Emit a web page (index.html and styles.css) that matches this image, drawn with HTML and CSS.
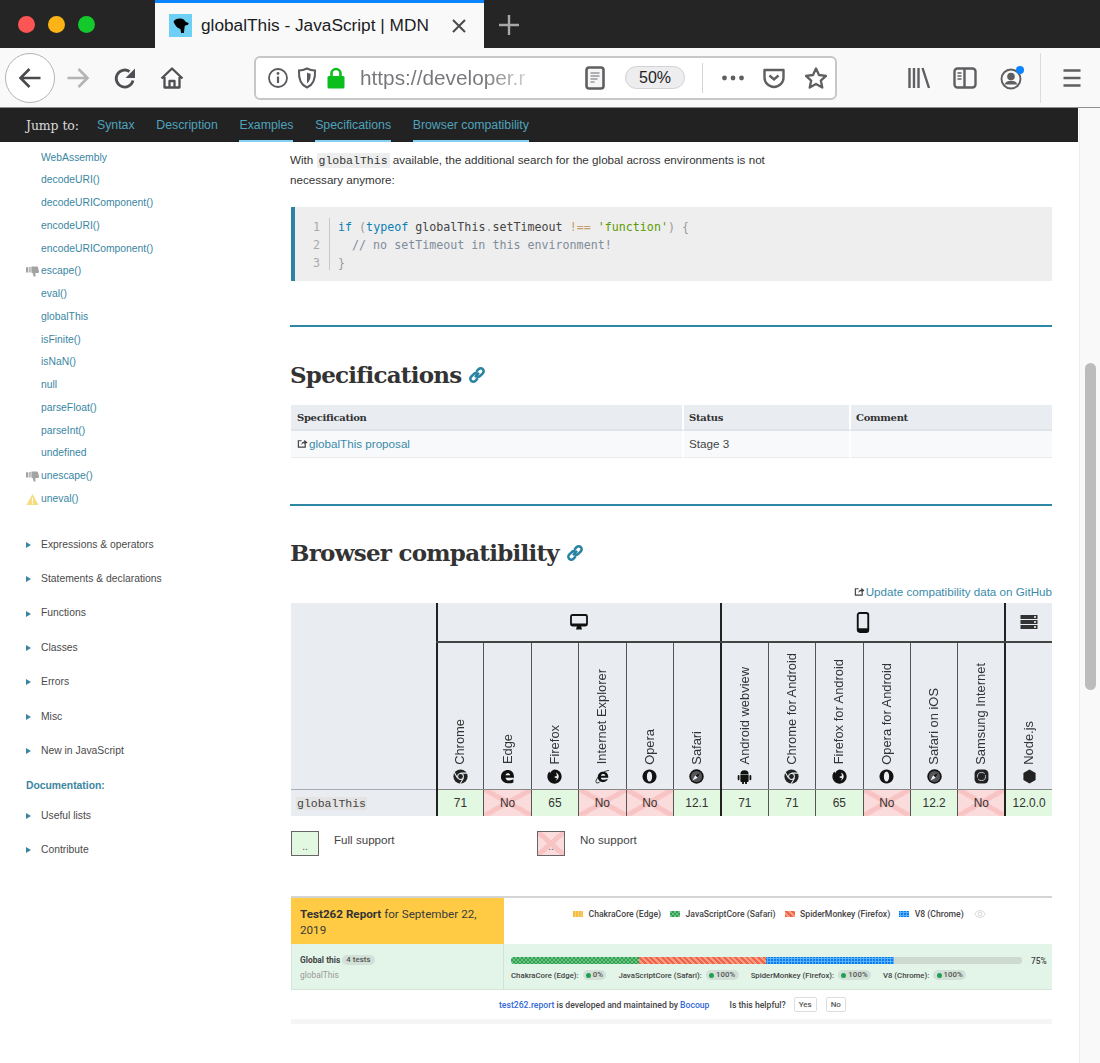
FILE: index.html
```html
<!DOCTYPE html>
<html lang="en">
<head>
<meta charset="utf-8">
<title>globalThis - JavaScript | MDN</title>
<link rel="stylesheet" href="styles.css">
</head>
<body>
<svg class="sprite" aria-hidden="true">
  <symbol id="i-chrome" viewBox="0 0 16 16"><circle cx="8" cy="8" r="7.6" fill="#222"/><circle cx="8" cy="8" r="3.1" fill="#222" stroke="#e9edf1" stroke-width="1.1"/><path d="M8 4.4H15.2M4.9 9.8L1.4 3.6M11.1 9.8L7.6 15.8" stroke="#e9edf1" stroke-width="1.1" fill="none"/></symbol>
  <symbol id="i-edge" viewBox="0 0 16 16"><path fill-rule="evenodd" fill="#111" d="M1 8.5C1 3.5 4.5 1 8.5 1 12.500 1 15 4 15 9.200H6c.2 3.400 5 3.800 8.300 1.800v3.300C9 16.500 1 14.800 1 8.500zM6 6.600h4.800C10.600 4 6.400 4 6 6.600z"/></symbol>
  <symbol id="i-firefox" viewBox="0 0 16 16"><path fill="#111" d="M8 .6c4.300 0 7.600 3.300 7.600 7.500S12.200 15.700 8 15.700.4 12.300.4 8.100C.4 6 1.300 4 2.600 2.700L3.400 4.400C4.300 2.500 6 .9 8 .6z"/><path fill="#e9edf1" d="M9.600 3.600c1.900.8 3 2.500 2.900 4.500-.1 2.100-1.500 3.800-3.400 4.300 1-.7 1.500-1.700 1.400-2.800L8.300 9.300l-.2-1.200 2.400-.6C10.500 6 10.200 4.700 9.600 3.600z"/></symbol>
  <symbol id="i-ie" viewBox="0 0 16 16"><path fill-rule="evenodd" fill="#111" d="M3 8.500C3 5 5.500 2.800 8.800 2.800 12 2.800 14.200 5 14.200 9.200H6.200c.2 2.800 4.300 3 7.500 1.300 -.8 2.500-2.800 3.500-5 3.500C5.500 14 3 12 3 8.500zM6.300 7.100h4.700C10.900 4.900 6.600 4.900 6.300 7.100z"/><path d="M14.800 1.600C11 1.400 2.600 7 1 13c-.5 2 1.500 2.600 4 1" stroke="#111" stroke-width=".9" fill="none"/></symbol>
  <symbol id="i-opera" viewBox="0 0 16 16"><path fill-rule="evenodd" fill="#111" d="M8 .5a7.500 7.500 0 1 0 .01 0zM8 2.600c1.800 0 2.800 2.500 2.800 5.400S9.800 13.400 8 13.400 5.200 10.900 5.200 8 6.200 2.600 8 2.600z"/></symbol>
  <symbol id="i-safari" viewBox="0 0 16 16"><circle cx="8" cy="8" r="7.700" fill="#111"/><circle cx="8" cy="8" r="6" fill="#555"/><path d="M12.300 3.700L9.400 9.400 3.700 12.300 6.600 6.600z" fill="#eef"/><path d="M12.300 3.700L9.400 9.400 6.600 6.600z" fill="#111"/></symbol>
  <symbol id="i-android" viewBox="0 0 16 16"><path fill="#111" d="M3.600 5.800A4.400 4.400 0 0 1 12.400 5.800zM3.600 6.500h8.800v6.300a1 1 0 0 1-1 1h-.8v1.500a1 1 0 0 1-2 0v-1.500H7.400v1.500a1 1 0 0 1-2 0v-1.500h-.8a1 1 0 0 1-1-1zM1.700 6.500a.95.950 0 0 1 .95.950v3.600a.95.950 0 0 1-1.900 0V7.450A.95.950 0 0 1 1.700 6.500zM14.300 6.500a.95.950 0 0 1 .95.950v3.600a.95.950 0 0 1-1.900 0V7.450a.95.950 0 0 1 .95-.95z"/></symbol>
  <symbol id="i-samsung" viewBox="0 0 16 16"><rect x=".6" y=".6" width="14.800" height="14.800" rx="4.500" fill="#222"/><circle cx="8" cy="8" r="4.300" fill="none" stroke="#ccd" stroke-width="1"/><path d="M2.800 10.500C5 9 10 6 13.200 5.300" stroke="#222" stroke-width="1.600" fill="none"/></symbol>
  <symbol id="i-node" viewBox="0 0 16 16"><path fill="#222" d="M8 .6l6.500 3.700v7.400L8 15.400 1.500 11.700V4.300z"/></symbol>
  <symbol id="i-ext" viewBox="0 0 12 12"><path d="M9 6.800V10H1.500V3H5" fill="none" stroke="#444" stroke-width="1.300"/><path d="M4.500 7.500C5 5 6.500 3.800 8 3.800V2l3.500 2.800L8 7.400V5.600C6.500 5.600 5.400 6.200 4.500 7.500z" fill="#444"/></symbol>
  <symbol id="i-link" viewBox="0 0 16 16"><g fill="none" stroke="#2a83a2" stroke-width="2.600" stroke-linecap="round"><path d="M6.700 9.300L9.300 6.700"/><path d="M8 3.800l1.600-1.600a2.900 2.900 0 0 1 4.200 4.100l-2.600 2.600a2.900 2.900 0 0 1-3.400.5"/><path d="M8 12.200l-1.600 1.600a2.900 2.900 0 0 1-4.200-4.100l2.600-2.600a2.900 2.900 0 0 1 3.400-.5"/></g></symbol>
  <symbol id="i-thumb" viewBox="0 0 14 14"><path fill="#a3a3a3" d="M0 2.500h2.500v5.500H0zM3.500 2.200h1.500V8H3.500zM5.800 1.500H11.500c.8 0 1.300.6 1.500 1.300l1 4.300c.1.800-.4 1.400-1.200 1.400H10l.3 2.500c.2 1.800-1.900 2-2.300.7L7.300 9 5.800 8z"/></symbol>
</svg>

<div class="window">
  <header class="tabbar">
    <span class="light light-red"></span>
    <span class="light light-yellow"></span>
    <span class="light light-green"></span>
    <div class="tab">
      <svg class="favicon" viewBox="0 0 23 23"><rect width="23" height="23" fill="#6fd0f5"/><path d="M4.500 7.500C6 5 9 4 12 4.500c2.500.3 4 1.800 4.500 3.300l3 1.200c.3 1.300-.5 2.200-2 2.200-.8 0-1.500.3-1.800 1l-.8 6.800h-2.800l-.6-3.800-3.500-2C6.500 11.700 5.500 10 4.500 7.500z" fill="#000"/></svg>
      <span class="tab-title">globalThis - JavaScript | MDN</span>
      <svg class="tab-close" viewBox="0 0 16 16"><path d="M2 2l12 12M14 2L2 14" stroke="#4a4a4a" stroke-width="2" fill="none"/></svg>
    </div>
    <svg class="newtab" viewBox="0 0 22 22"><path d="M11 1v20M1 11h20" stroke="#a8a8a8" stroke-width="2.400" fill="none"/></svg>
  </header>

  <nav class="toolbar">
    <div class="backbtn">
      <svg class="ic24" viewBox="0 0 24 24"><path d="M22.500 12H2.500M11.500 3l-9 9 9 9" stroke="#4a4a4f" stroke-width="2.600" fill="none"/></svg>
    </div>
    <div class="slot slot-fwd"><svg class="ic24" viewBox="0 0 24 24"><path d="M1.500 12H21.500M12.500 3l9 9-9 9" stroke="#b4b4b6" stroke-width="2.600" fill="none"/></svg></div>
    <div class="slot slot-reload"><svg class="ic24" viewBox="0 0 24 24"><path d="M20 14.500A8.500 8.500 0 1 1 16.500 5.500" stroke="#4f4f53" stroke-width="2.800" fill="none"/><path d="M22 2.500v9.500h-9.500z" fill="#4f4f53"/></svg></div>
    <div class="slot slot-home"><svg class="ic24" viewBox="0 0 24 24"><path d="M1.500 12.500L12 2.500l10.500 10M4.500 11v10.500h15V11M9.500 21.500V15h5v6.500" stroke="#4f4f53" stroke-width="2.300" fill="none" stroke-linejoin="round"/></svg></div>

    <div class="urlbar">
      <svg class="ic24" viewBox="0 0 24 24"><circle cx="12" cy="12" r="9" stroke="#5a5a5e" stroke-width="1.800" fill="none"/><path d="M12 10.500v6.500" stroke="#5a5a5e" stroke-width="2.200"/><circle cx="12" cy="7.500" r="1.400" fill="#5a5a5e"/></svg>
      <svg class="ic24" viewBox="0 0 24 24"><path d="M4 4.500C8 4.500 10 3.500 12 2.500c2 1 4 2 8 2 .5 8.500-2 14.500-8 17-6-2.500-8.500-8.500-8-17z" stroke="#5a5a5e" stroke-width="2" fill="none"/><path d="M12 6.500c1 .6 2 1 3.700 1.200.2 4-1 7.800-3.700 9.800z" fill="#5a5a5e"/></svg>
      <svg class="ic24" viewBox="0 0 24 24"><path d="M7.500 11V7.500a4.500 4.500 0 0 1 9 0V11" stroke="#0cbe1c" stroke-width="2.600" fill="none"/><rect x="3.500" y="10" width="17" height="12.500" rx="1.500" fill="#0cbe1c"/></svg>
      <span class="url">https://developer.r</span>
      <svg class="ic24" viewBox="0 0 24 24"><rect x="3.500" y="1.500" width="17" height="21" rx="2.500" stroke="#5f5f62" stroke-width="2.600" fill="#f6f6f6"/><path d="M7.500 7h9M7.500 10h9M7.500 13h7M7.500 16h4" stroke="#6a6a6e" stroke-width="1.100"/></svg>
      <span class="zoompill">50%</span>
      <span class="urlsep"></span>
      <svg class="ic24 u-dots" viewBox="0 0 24 24"><circle cx="3.500" cy="12" r="2.400" fill="#5f5f62"/><circle cx="12" cy="12" r="2.400" fill="#5f5f62"/><circle cx="20.500" cy="12" r="2.400" fill="#5f5f62"/></svg>
      <svg class="ic24 u-pocket" viewBox="0 0 24 24"><path d="M2.500 4h19v7.500a9.500 9.500 0 0 1-19 0z" stroke="#5f5f62" stroke-width="2.400" fill="none" stroke-linejoin="round"/><path d="M7.500 9.500l4.500 4 4.500-4" stroke="#5f5f62" stroke-width="2.400" fill="none"/></svg>
      <svg class="ic24 u-star" viewBox="0 0 24 24"><path d="M12 2.500l3 6.500 7 .8-5.200 4.800 1.500 7L12 18l-6.300 3.600 1.500-7L2 9.800l7-.8z" stroke="#5f5f62" stroke-width="2.300" fill="none" stroke-linejoin="round"/></svg>
    </div>

    <div class="toolbar-right">
      <div class="slot slot-46"><svg class="ic24" viewBox="0 0 24 24"><path d="M2.500 2v20M7 2v20M11.500 2v20M15.500 2l6.500 20" stroke="#5f5f62" stroke-width="2.400" fill="none"/></svg></div>
      <div class="slot slot-46"><svg class="ic24" viewBox="0 0 24 24"><rect x="1.500" y="2.500" width="21" height="19" rx="3" stroke="#5f5f62" stroke-width="2.400" fill="none"/><path d="M11.500 2.500v19" stroke="#5f5f62" stroke-width="2.400"/><path d="M4.500 7h4M4.500 10h4M4.500 13h4" stroke="#5f5f62" stroke-width="1.300"/></svg></div>
      <div class="slot slot-48 account">
        <svg class="ic24" viewBox="0 0 24 24"><circle cx="11" cy="13" r="9.500" stroke="#5f5f62" stroke-width="1.900" fill="none"/><circle cx="11" cy="10.500" r="3.800" fill="#5f5f62"/><path d="M4.500 18.500c1-3 3.500-3.800 6.500-3.800s5.500.8 6.500 3.800z" fill="#5f5f62"/></svg>
        <span class="dot"></span>
      </div>
      <span class="tbsep"></span>
      <div class="slot slot-menu"><svg class="ic24" viewBox="0 0 24 24"><path d="M3.500 4.500h17M3.500 12h17M3.500 19.500h17" stroke="#5f5f62" stroke-width="2.500" fill="none"/></svg></div>
    </div>
  </nav>

  <div class="viewport">
    <div class="page">
      <div class="jumpbar">
        <span class="jump-label">Jump to:</span>
        <a class="jump-link">Syntax</a>
        <a class="jump-link">Description</a>
        <a class="jump-link jump-seen">Examples</a>
        <a class="jump-link jump-seen">Specifications</a>
        <a class="jump-link jump-seen">Browser compatibility</a>
      </div>
      <div class="columns">
        <aside class="sidebar">
          <ul class="side-list">
            <li>WebAssembly</li>
            <li>decodeURI()</li>
            <li>decodeURIComponent()</li>
            <li>encodeURI()</li>
            <li>encodeURIComponent()</li>
            <li><svg class="side-ic"><use href="#i-thumb"/></svg>escape()</li>
            <li>eval()</li>
            <li>globalThis</li>
            <li>isFinite()</li>
            <li>isNaN()</li>
            <li>null</li>
            <li>parseFloat()</li>
            <li>parseInt()</li>
            <li>undefined</li>
            <li><svg class="side-ic"><use href="#i-thumb"/></svg>unescape()</li>
            <li><svg class="side-ic" viewBox="0 0 14 14"><path d="M7 1l6.500 12H.5z" fill="#f6dc7c"/><path d="M7 5v4.500M7 10.500v1.500" stroke="#fff" stroke-width="1.300"/></svg>uneval()</li>
          </ul>
          <ul class="side-groups">
            <li><span class="tri"></span>Expressions &amp; operators</li>
            <li><span class="tri"></span>Statements &amp; declarations</li>
            <li><span class="tri"></span>Functions</li>
            <li><span class="tri"></span>Classes</li>
            <li><span class="tri"></span>Errors</li>
            <li><span class="tri"></span>Misc</li>
            <li><span class="tri"></span>New in JavaScript</li>
            <li class="side-head">Documentation:</li>
            <li><span class="tri"></span>Useful lists</li>
            <li><span class="tri"></span>Contribute</li>
          </ul>
        </aside>

        <main class="main">
          <p class="lead">With <code class="inline-code">globalThis</code> available, the additional search for the global across environments is not necessary anymore:</p>

          <div class="codeblock">
            <div class="gutter"><span>1</span><span>2</span><span>3</span></div>
            <pre class="code"><span class="k">if</span> <span class="p">(</span><span class="k">typeof</span> globalThis<span class="p">.</span>setTimeout <span class="o">!==</span> <span class="s">'function'</span><span class="p">) {</span>
  <span class="c">// no setTimeout in this environment!</span>
<span class="p">}</span></pre>
          </div>

          <hr class="rule rule-a">
          <h2 class="heading heading-a">Specifications <svg class="anchor"><use href="#i-link"/></svg></h2>

          <table class="spec">
            <colgroup><col class="spec-c1"><col class="spec-c2"><col></colgroup>
            <thead><tr><th>Specification</th><th>Status</th><th>Comment</th></tr></thead>
            <tbody><tr><td><svg class="ext"><use href="#i-ext"/></svg><a class="lnk">globalThis proposal</a></td><td>Stage 3</td><td></td></tr></tbody>
          </table>

          <hr class="rule rule-b">
          <h2 class="heading heading-b">Browser compatibility <svg class="anchor"><use href="#i-link"/></svg></h2>

          <div class="update"><svg class="ext"><use href="#i-ext"/></svg><a class="lnk">Update compatibility data on GitHub</a></div>

          <table class="compat">
            <colgroup>
              <col class="c-first">
              <col class="c-b"><col class="c-b"><col class="c-b"><col class="c-b"><col class="c-b"><col class="c-b">
              <col class="c-b"><col class="c-b"><col class="c-b"><col class="c-b"><col class="c-b"><col class="c-b">
              <col>
            </colgroup>
            <thead>
              <tr class="r-plat">
                <th rowspan="2" class="blank"></th>
                <th colspan="6" class="plat"><svg class="plat-ic" viewBox="0 0 18 16"><rect x="1" y="1" width="16" height="10.500" rx="1.500" stroke="#111" stroke-width="1.800" fill="none"/><rect x="1" y="9.500" width="16" height="2.500" fill="#111"/><path d="M6 15.500h6l-1-3.500H7z" fill="#111"/></svg></th>
                <th colspan="6" class="plat"><svg class="plat-ic plat-phone" viewBox="0 0 12 20"><rect x="1" y="1" width="10" height="18" rx="1.800" stroke="#111" stroke-width="1.800" fill="none"/><rect x="1" y="15.500" width="10" height="3.500" fill="#111"/></svg></th>
                <th class="plat"><svg class="plat-ic" viewBox="0 0 18 16"><path d="M.5 1h17v4H.5zM.5 6h17v4H.5zM.5 11h17v4H.5z" fill="#333"/><circle cx="15" cy="3" r="1" fill="#fff"/><circle cx="15" cy="8" r="1" fill="#fff"/><circle cx="15" cy="13" r="1" fill="#fff"/></svg></th>
              </tr>
              <tr class="r-names">
                <th><div class="bw"><svg class="bw-ic"><use href="#i-chrome"/></svg><span class="vt">Chrome</span></div></th>
                <th><div class="bw"><svg class="bw-ic"><use href="#i-edge"/></svg><span class="vt">Edge</span></div></th>
                <th><div class="bw"><svg class="bw-ic"><use href="#i-firefox"/></svg><span class="vt">Firefox</span></div></th>
                <th><div class="bw"><svg class="bw-ic"><use href="#i-ie"/></svg><span class="vt">Internet Explorer</span></div></th>
                <th><div class="bw"><svg class="bw-ic"><use href="#i-opera"/></svg><span class="vt">Opera</span></div></th>
                <th><div class="bw"><svg class="bw-ic"><use href="#i-safari"/></svg><span class="vt">Safari</span></div></th>
                <th class="grp"><div class="bw"><svg class="bw-ic"><use href="#i-android"/></svg><span class="vt">Android webview</span></div></th>
                <th><div class="bw"><svg class="bw-ic"><use href="#i-chrome"/></svg><span class="vt">Chrome for Android</span></div></th>
                <th><div class="bw"><svg class="bw-ic"><use href="#i-firefox"/></svg><span class="vt">Firefox for Android</span></div></th>
                <th><div class="bw"><svg class="bw-ic"><use href="#i-opera"/></svg><span class="vt">Opera for Android</span></div></th>
                <th><div class="bw"><svg class="bw-ic"><use href="#i-safari"/></svg><span class="vt">Safari on iOS</span></div></th>
                <th><div class="bw"><svg class="bw-ic"><use href="#i-samsung"/></svg><span class="vt">Samsung Internet</span></div></th>
                <th class="grp"><div class="bw"><svg class="bw-ic"><use href="#i-node"/></svg><span class="vt">Node.js</span></div></th>
              </tr>
            </thead>
            <tbody>
              <tr>
                <th class="feature"><code>globalThis</code></th>
                <td class="yes grp">71</td><td class="no">No</td><td class="yes">65</td><td class="no">No</td><td class="no">No</td><td class="yes">12.1</td>
                <td class="yes grp">71</td><td class="yes">71</td><td class="yes">65</td><td class="no">No</td><td class="yes">12.2</td><td class="no">No</td>
                <td class="yes grp">12.0.0</td>
              </tr>
            </tbody>
          </table>

          <div class="legend">
            <div class="legend-item legend-first"><span class="swatch yes">..</span><span class="legend-text">Full support</span></div>
            <div class="legend-item"><span class="swatch no">..</span><span class="legend-text">No support</span></div>
          </div>

          <section class="t262">
            <div class="t-row t-top">
              <div class="t-title"><b>Test262 Report</b> for September 22, 2019</div>
              <div class="t-keys">
                <span class="key"><i class="sw sw-chakra"></i>ChakraCore (Edge)</span>
                <span class="key"><i class="sw sw-jsc"></i>JavaScriptCore (Safari)</span>
                <span class="key"><i class="sw sw-sm"></i>SpiderMonkey (Firefox)</span>
                <span class="key"><i class="sw sw-v8"></i>V8 (Chrome)</span>
                <svg class="eye" viewBox="0 0 16 12"><path d="M1 6c3-6 11-6 14 0-3 6-11 6-14 0z" fill="none" stroke="#ccc" stroke-width="1"/><circle cx="8" cy="6" r="2.500" fill="none" stroke="#ccc" stroke-width="1"/></svg>
              </div>
            </div>
            <div class="t-row t-bottom">
              <div class="t-name">
                <div class="t-name1"><b>Global this</b><span class="pill">4 tests</span></div>
                <div class="t-name2">globalThis</div>
              </div>
              <div class="t-results">
                <div class="t-barline">
                  <div class="bar"><span class="seg sw-jsc"></span><span class="seg sw-sm"></span><span class="seg sw-v8"></span></div>
                  <b class="pct">75%</b>
                </div>
                <div class="t-stats">
                  <b>ChakraCore (Edge):</b><span class="pill stat"><i class="gdot"></i>0%</span>
                  <b>JavaScriptCore (Safari):</b><span class="pill stat"><i class="gdot"></i>100%</span>
                  <b>SpiderMonkey (Firefox):</b><span class="pill stat"><i class="gdot"></i>100%</span>
                  <b>V8 (Chrome):</b><span class="pill stat"><i class="gdot"></i>100%</span>
                </div>
              </div>
            </div>
            <div class="t-foot">
              <span class="foot-credit"><a class="blue">test262.report</a> is developed and maintained by <a class="blue">Bocoup</a></span>
              <span class="foot-help">Is this helpful?</span>
              <span class="fbtn">Yes</span>
              <span class="fbtn">No</span>
            </div>
            <div class="t-band"></div>
          </section>
        </main>
      </div>
    </div>
    <div class="scrollbar"><div class="thumb"></div></div>
  </div>
</div>
</body>
</html>
```

FILE: styles.css
```css
* { box-sizing: border-box; }
html, body { margin: 0; padding: 0; background: #fff; }
body { font-family: "Liberation Sans", Arial, sans-serif; color: #333; overflow: hidden; }
.sprite { display: none; }
ul { list-style: none; margin: 0; padding: 0; }
.window { width: 1100px; height: 1063px; overflow: hidden; display: flex; flex-direction: column; }

/* tab strip */
.tabbar { height: 48px; background: #252525; display: flex; align-items: center; padding-left: 18px; flex: none; }
.light { width: 17px; height: 17px; border-radius: 50%; margin-right: 13px; margin-top: 1px; }
.light-red { background: #fd5454; }
.light-yellow { background: #fcb316; }
.light-green { background: #14c92c; }
.tab { margin-left: 47px; width: 329px; height: 48px; background: #f9f9fa; border-top: 3px solid #0a84ff; display: flex; align-items: center; padding-left: 14px; }
.favicon { width: 23px; height: 23px; flex: none; }
.tab-title { margin-left: 9px; font-size: 17.250px; color: #1c1c1e; flex: 1; white-space: nowrap; }
.tab-close { width: 16px; height: 16px; margin-right: 17px; flex: none; }
.newtab { width: 22px; height: 22px; margin-left: 14px; margin-top: 1px; }

/* toolbar */
.toolbar { height: 60px; background: #f9f9fa; border-bottom: 1px solid #8f8f91; display: flex; align-items: center; padding-left: 5px; flex: none; }
.ic24 { width: 24px; height: 24px; flex: none; display: block; }
.backbtn { width: 50px; height: 50px; border-radius: 50%; border: 1.500px solid #b3b3b3; background: #fff; display: flex; align-items: center; justify-content: center; flex: none; }
.slot { height: 48px; display: flex; align-items: center; justify-content: center; flex: none; }
.slot-fwd { width: 46px; }
.slot-reload { width: 47px; }
.slot-home { width: 48px; }
.slot-46 { width: 46px; }
.slot-48 { width: 48px; }
.slot-menu { width: 48px; margin-left: 7px; }
.urlbar { margin-left: 58px; width: 583px; height: 44px; background: #fff; border: 2px solid #c7c7c9; border-radius: 6px; display: flex; align-items: center; padding-left: 10px; flex: none; }
.urlbar .ic24 + .ic24 { margin-left: 5px; }
.url { margin-left: 12px; width: 223px; flex: none; font-size: 20.800px; white-space: nowrap; overflow: hidden; background: linear-gradient(90deg, #77777b 0, #77777b 125px, #c4c4c6 160px, #f2f2f2 172px, #fff 180px); -webkit-background-clip: text; background-clip: text; color: transparent; }
.zoompill { margin-left: 18px; width: 60px; height: 23px; border-radius: 12px; background: #ededf0; border: 1px solid #d2d2d4; display: flex; align-items: center; justify-content: center; font-size: 16px; color: #222; flex: none; }
.urlsep { margin-left: 17px; width: 1px; height: 30px; background: #d4d4d6; flex: none; }
.urlbar .ic24.u-dots { margin-left: 18px; }
.urlbar .ic24.u-pocket { margin-left: 17px; }
.urlbar .ic24.u-star { margin-left: 18px; }
.toolbar-right { margin-left: 59px; display: flex; align-items: center; }
.account { position: relative; }
.dot { position: absolute; top: 12px; left: 28px; width: 8px; height: 8px; border-radius: 50%; background: #0a84ff; }
.tbsep { width: 1px; height: 50px; background: #dcdcde; margin-left: 4px; flex: none; }

/* viewport */
.viewport { flex: 1; display: flex; min-height: 0; }
.page { width: 1079px; flex: none; }
.scrollbar { flex: 1; background: #f9f9f9; border-left: 1px solid #ededed; padding: 255px 4px 0 5px; }
.thumb { height: 327px; background: #bcbcbc; border-radius: 6px; }

.jumpbar { height: 34px; background: #222; display: flex; align-items: flex-start; padding-left: 26px; width: 1078px; }
.jump-label { font-family: "DejaVu Serif", serif; font-size: 12.500px; color: #d8d8d8; line-height: 35px; width: 71px; flex: none; white-space: nowrap; letter-spacing: -.1px; }
.jump-link { color: #4ea3bd; font-size: 12.300px; line-height: 35px; height: 34px; margin-right: 21.700px; }
.jump-seen { border-bottom: 2px solid #83d0f2; }

.columns { display: flex; }
.sidebar { width: 290px; flex: none; padding: 4.700px 0 0 26px; font-size: 10.350px; }
.side-list li { height: 22.750px; line-height: 22.750px; padding-left: 15px; color: #3a86a2; position: relative; white-space: nowrap; }
.side-ic { position: absolute; left: 0; top: 5px; width: 13px; height: 13px; }
.side-groups { margin-top: 17px; }
.side-groups li { height: 34.400px; line-height: 34.400px; color: #4a4a4a; display: flex; align-items: center; white-space: nowrap; }
.tri { width: 0; height: 0; border-left: 5px solid #3a86a2; border-top: 3px solid transparent; border-bottom: 3px solid transparent; margin-right: 10px; }
.side-groups .side-head { height: 30.400px; padding-top: 4.400px; line-height: 26px; color: #3a86a2; font-weight: bold; }

.main { width: 762px; flex: none; padding-top: 8px; font-size: 11.650px; }
.lead { margin: 0; width: 480px; font-size: 11.650px; line-height: 20px; color: #333; }
.inline-code { font-family: "Liberation Mono", monospace; font-size: 11.500px; line-height: 1; background: #eee; padding: 1px 2px; color: #333; }
.codeblock { margin-top: 17px; height: 74px; background: #eee; border-left: 4px solid #2a83a2; margin-left: 1px; display: flex; padding-top: 11px; font-family: "DejaVu Sans Mono", monospace; font-size: 11.660px; line-height: 18px; }
.gutter { width: 17px; margin-left: 18px; height: 52px; border-right: 1px solid #c8c8c8; display: flex; flex-direction: column; color: #aaa; }
.gutter span { height: 18px; }
.code { margin: 0 0 0 8px; font: inherit; color: #444; }
.k { color: #0a7fb5; }
.p { color: #999; }
.o { color: #c69b6d; }
.s { color: #5d9b00; }
.c { color: #7f8c9a; }

.rule { border: 0; height: 2px; background: #2f87a6; margin: 0; }
.rule-a { margin-top: 44px; }
.rule-b { margin-top: 46px; }
.heading { margin: 0; font-family: "DejaVu Serif", serif; font-weight: bold; font-size: 23px; line-height: 36px; color: #333; letter-spacing: -.75px; display: flex; align-items: center; white-space: nowrap; }
.heading-a { margin-top: 30px; }
.heading-b { margin-top: 29px; }
.anchor { width: 16px; height: 16px; margin-left: 8px; flex: none; }

.spec { margin: 12px 0 0 1px; width: 761px; border-collapse: separate; border-spacing: 0; table-layout: fixed; font-size: 11.650px; }
.spec-c1 { width: 393px; }
.spec-c2 { width: 167px; }
.spec th { height: 26px; background: #e9edf1; border-right: 2px solid #fff; border-bottom: 2px solid #dfe4e8; text-align: left; padding: 0 0 0 5px; font-family: "DejaVu Serif", serif; font-size: 10px; letter-spacing: -.3px; color: #333; }
.spec th:first-child, .spec td:first-child { padding-left: 6px; }
.spec th:last-child, .spec td:last-child { border-right: 0; }
.spec td { height: 27px; background: #f7f9fa; border-right: 2px solid #fff; border-bottom: 1px solid #e8ecef; padding: 0 0 1px 5px; color: #444; }
.lnk { color: #3a8bab; }
.ext { width: 11px; height: 11px; margin-right: 1px; vertical-align: -1px; }

.update { margin-top: 13px; height: 16px; line-height: 16px; font-size: 11.650px; text-align: right; }

.compat { margin: 3px 0 0 1px; width: 761px; border-collapse: collapse; table-layout: fixed; font-size: 11.900px; }
.c-first { width: 145.500px; }
.c-b { width: 47.400px; }
.compat th, .compat td { padding: 0; background: #e9edf1; font-weight: normal; text-align: center; border: 0; }
.r-plat th { height: 39px; border-bottom: 2px solid #444; }
.r-plat .plat { border-left: 2px solid #222; }
.r-plat .blank { background: #e9edf1; border-bottom: 1px solid #aab; }
.plat-ic { height: 18px; width: 18px; display: block; margin: 0 auto; }
.plat-phone { height: 21px; }
.r-names th { height: 147px; vertical-align: bottom; border-left: 1px solid #555; border-bottom: 1px solid #888; }
.r-names .grp { border-left: 2px solid #222; }
.r-names th:first-child { border-left: 2px solid #222; }
.bw { display: flex; flex-direction: column-reverse; align-items: center; padding-bottom: 5px; }
.bw-ic { width: 15px; height: 15px; margin-top: 4px; flex: none; }
.vt { writing-mode: vertical-rl; transform: rotate(180deg); font-size: 12.900px; color: #333; white-space: nowrap; line-height: 14px; }
.compat tbody td, .compat tbody th { height: 27px; border-left: 1px solid #555; color: #333; }
.compat tbody .grp { border-left: 2px solid #222; }
.compat .feature { border-left: 0; text-align: left; padding-left: 5px; }
.feature code { font-family: "Liberation Mono", monospace; font-size: 11.500px; background: #e4e4e4; color: #444; padding: 0 1px; }
.compat td.yes, .swatch.yes { background: #e2f8e0; }
.compat td.no, .swatch.no {
  background-color: #fbdcdc;
  background-image:
    linear-gradient(to top right, transparent calc(50% - 2.500px), #f8c3c3 calc(50% - 2.500px), #f8c3c3 calc(50% + 2.500px), transparent calc(50% + 2.500px)),
    linear-gradient(to bottom right, transparent calc(50% - 2.500px), #f8c3c3 calc(50% - 2.500px), #f8c3c3 calc(50% + 2.500px), transparent calc(50% + 2.500px));
}

.legend { margin-top: 15px; margin-left: 1px; height: 25px; display: flex; font-size: 11.600px; }
.legend-item { display: flex; }
.legend-first { width: 246px; }
.swatch { width: 28px; height: 25px; border: 1px solid #666; font-size: 10px; line-height: 10px; text-align: center; padding-top: 10px; color: #555; flex: none; }
.legend-text { margin-left: 15px; line-height: 18px; color: #444; }

.t262 { margin-top: 40px; margin-left: 1px; font-family: Roboto, sans-serif; border-top: 2px solid #d4d4d4; }
.t-row { display: flex; }
.t-top { height: 46px; }
.t-title { width: 213px; background: #ffcb45; padding: 8px 8px 0 9px; font-size: 11.670px; line-height: 16px; color: #3b3b3b; flex: none; }
.t-title b { color: #333; font-weight: 700; }
.t-keys { flex: 1; display: flex; align-items: flex-start; padding: 11px 0 0 69px; font-size: 8.650px; font-weight: 500; color: #444; white-space: nowrap; }
.key { display: flex; align-items: center; margin-right: 9px; line-height: 10px; }
.sw { display: block; width: 10px; height: 6px; margin-right: 5.500px; }
.eye { width: 12px; height: 10px; margin-left: 1px; }
.sw-chakra { background: repeating-linear-gradient(90deg, #f6bd46 0 2px, #f9d078 2px 3px); }
.sw-jsc { background: repeating-conic-gradient(#2f9e4f 0 25%, #6cc584 0 50%) 0 0 / 4px 4px; }
.sw-sm { background: repeating-linear-gradient(45deg, #f0644a 0 2px, #fb9d85 2px 4px); }
.sw-v8 { background: radial-gradient(circle, #5bb0ff 0 1px, #0a7fea 1.200px) 0 0 / 3px 3px; }
.t-bottom { height: 46px; background: #e3f4e8; border-bottom: 1px solid #d4e6da; border-left: 1px solid #d4e6da; }
.t-name { width: 212px; flex: none; border-right: 1px solid #cfe2d6; padding: 10px 0 0 8px; }
.t-name1 { font-size: 8.400px; line-height: 12px; color: #444; display: flex; align-items: center; }
.t-name2 { font-size: 8.400px; line-height: 12px; margin-top: 3px; color: #999; }
.pill { background: #d2e0d7; border-radius: 5px; font-size: 7.800px; line-height: 10px; padding: 0 4px; margin-left: 2px; color: #555; letter-spacing: .1px; display: inline-flex; align-items: center; font-weight: 500; }
.t-results { flex: 1; padding: 13px 0 0 7px; min-width: 0; }
.t-barline { display: flex; align-items: center; height: 7px; }
.bar { width: 511px; height: 7px; border-radius: 3px; background: #cdd9d1; overflow: hidden; display: flex; flex: none; }
.seg { width: 127.700px; display: block; }
.pct { margin-left: 9px; font-size: 8.400px; font-weight: 500; color: #444; }
.t-stats { margin-top: 6px; display: flex; align-items: center; font-size: 7.800px; color: #444; white-space: nowrap; }
.t-stats b { font-weight: 500; }
.stat { margin: 0 12px 0 4px; height: 10px; padding: 0 3.200px; }
.gdot { width: 5px; height: 5px; border-radius: 50%; background: #1fa052; margin-right: 2px; display: block; }
.t-foot { height: 29px; padding-left: 208px; display: flex; align-items: center; font-size: 8.650px; font-weight: 500; color: #444; white-space: nowrap; }
.blue { color: #3367d6; }
.foot-help { margin-left: 20px; margin-right: 8px; }
.fbtn { height: 15px; line-height: 13px; border: 1px solid #ddd; border-radius: 2px; padding: 0 4px; margin-right: 9px; font-size: 8px; color: #555; background: #fff; }
.t-band { height: 5px; background: #f5f5f5; }
```
